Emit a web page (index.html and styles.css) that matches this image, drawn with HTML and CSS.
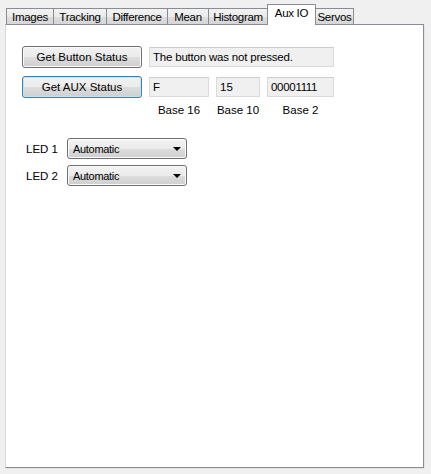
FILE: index.html
```html
<!DOCTYPE html>
<html>
<head>
<meta charset="utf-8">
<link rel="stylesheet" href="styles.css">
</head>
<body>
<div class="window">
  <div class="tabs">
    <div class="tab w-images">Images</div>
    <div class="tab w-tracking">Tracking</div>
    <div class="tab w-difference">Difference</div>
    <div class="tab w-mean">Mean</div>
    <div class="tab w-histogram">Histogram</div>
    <div class="tab active w-aux">Aux IO</div>
    <div class="tab w-servos">Servos</div>
  </div>
  <div class="panel">
    <div class="row row-top">
      <div class="btn">Get Button Status</div>
      <div class="box box-wide">The button was not pressed.</div>
    </div>
    <div class="row row-aux">
      <div class="btn focused">Get AUX Status</div>
      <div class="field">
        <div class="box box-16">F</div>
        <div class="base">Base 16</div>
      </div>
      <div class="field">
        <div class="box box-10">15</div>
        <div class="base">Base 10</div>
      </div>
      <div class="field">
        <div class="box box-2">00001111</div>
        <div class="base">Base 2</div>
      </div>
    </div>
    <div class="leds">
      <div class="led-row">
        <div class="led-label">LED 1</div>
        <div class="combo"><span>Automatic</span><span class="arrow"></span></div>
      </div>
      <div class="led-row">
        <div class="led-label">LED 2</div>
        <div class="combo"><span>Automatic</span><span class="arrow"></span></div>
      </div>
    </div>
  </div>
</div>
</body>
</html>
```
FILE: styles.css
```css
* { box-sizing: border-box; }
body {
  margin: 0;
  background: #f0f0f0;
  font-family: "Liberation Sans", Arial, sans-serif;
  font-size: 11px;
  color: #000;
}
.window {
  padding: 4px 0 0 5px;
  width: 431px;
  height: 474px;
}
.tabs {
  display: flex;
  align-items: flex-end;
  height: 21px;
  padding-left: 1px;
  margin-bottom: -1px;
  position: relative;
  z-index: 1;
}
.tab {
  height: 16px;
  margin-bottom: 1px;
  margin-left: -1px;
  border: 1px solid #898c95;
  border-bottom: none;
  background: linear-gradient(#f2f2f2, #ebebeb 50%, #dedede 51%, #d6d6d6);
  display: flex;
  align-items: center;
  justify-content: center;
  padding-top: 0;
  font-size: 11.5px;
  letter-spacing: -0.3px;
  white-space: nowrap;
}
.tab:first-child { margin-left: 0; }
.tab.active {
  height: 21px;
  margin-bottom: 0;
  background: #fff;
  align-items: flex-start;
  padding-top: 2px;
  position: relative;
  z-index: 2;
}
.w-images { width: 48px; }
.w-tracking { width: 54px; }
.w-difference { width: 62px; }
.w-mean { width: 42px; }
.w-histogram { width: 60px; }
.w-aux { width: 49px; }
.w-servos { width: 39px; }

.panel {
  width: 419px;
  height: 444px;
  background: #fff;
  border-top: 1px solid #898c95;
  border-left: 1px solid #d9d9d9;
  border-right: 1px solid #898c95;
  border-bottom: 1px solid #898c95;
  box-shadow: 1px 1px 0 #e3e3e3;
  padding: 21px 0 0 16px;
}
.row {
  display: flex;
  align-items: flex-start;
  gap: 7px;
}
.row-aux { margin-top: 8px; }
.btn {
  width: 120px;
  height: 22px;
  border: 1px solid #707070;
  border-radius: 3px;
  background: linear-gradient(#f2f2f2, #ebebeb 50%, #dddddd 51%, #cfcfcf);
  box-shadow: inset 0 0 0 1px #fcfcfc;
  display: flex;
  align-items: center;
  justify-content: center;
  font-size: 11.5px;
}
.btn.focused {
  border-color: #3c7fb1;
  box-shadow: inset 0 0 0 1px #bde6f9;
}
.box {
  height: 20px;
  margin-top: 1px;
  background: #f0f0f0;
  border: 1px solid #dadada;
  border-top-color: #cdcdcd;
  padding: 3px 0 0 3px;
  font-size: 11.5px;
  white-space: nowrap;
}
.box-wide { width: 185px; letter-spacing: -0.2px; }
.box-16 { width: 60px; }
.box-10 { width: 44px; }
.box-2 { width: 67px; letter-spacing: -0.3px; }
.field {
  display: flex;
  flex-direction: column;
  align-items: center;
}
.field .box { align-self: stretch; }
.base {
  margin-top: 6px;
  font-size: 11.5px;
  line-height: 14px;
}
.leds {
  margin-top: 21px;
  padding-left: 4px;
  display: flex;
  flex-direction: column;
  gap: 6px;
}
.led-row {
  display: flex;
  align-items: center;
}
.led-label {
  width: 41px;
  font-size: 11.5px;
}
.combo {
  width: 120px;
  height: 21px;
  border: 1px solid #707070;
  border-radius: 3px;
  background: linear-gradient(#f2f2f2, #ebebeb 50%, #dddddd 51%, #cfcfcf);
  box-shadow: inset 0 0 0 1px #fcfcfc;
  display: flex;
  align-items: center;
  justify-content: space-between;
  padding: 0 4px 0 5px;
  letter-spacing: -0.3px;
}
.arrow {
  width: 0;
  height: 0;
  border-left: 4px solid transparent;
  border-right: 4px solid transparent;
  border-top: 4px solid #000;
  margin-right: 1px;
}
```
